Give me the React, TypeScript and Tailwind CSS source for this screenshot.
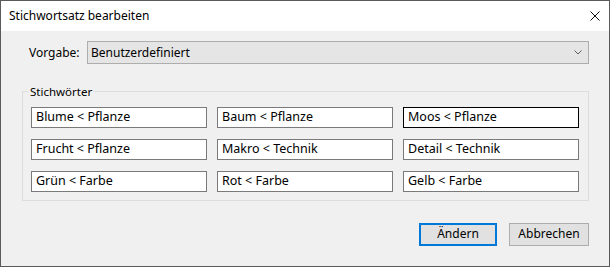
import React from "react";

const words = [
  "Blume < Pflanze",
  "Baum < Pflanze",
  "Moos < Pflanze",
  "Frucht < Pflanze",
  "Makro < Technik",
  "Detail < Technik",
  "Grün < Farbe",
  "Rot < Farbe",
  "Gelb < Farbe",
];

export default function App() {
  return (
    <div className="w-[610px] h-[267px] border border-[#5a5a5a] bg-[#f0f0f0] flex flex-col font-['Noto_Sans',sans-serif] text-black">
      <div className="h-[30px] bg-white flex items-center justify-between pl-[8px] pr-[9px] shrink-0">
        <span className="text-[12px] leading-none">Stichwortsatz bearbeiten</span>
        <svg width="10" height="10" viewBox="0 0 10 10" className="block">
          <path d="M0.5 0.5 L9.5 9.5 M9.5 0.5 L0.5 9.5" stroke="#111" strokeWidth="1" fill="none" />
        </svg>
      </div>
      <div className="flex-1 flex flex-col">
        <div className="flex items-center mt-[10px] pl-[28px] pr-[20px]">
          <span className="text-[12px] w-[58px] leading-none">Vorgabe:</span>
          <div className="flex-1 h-[23px] bg-[#e5e5e5] border border-[#adadad] flex items-center justify-between pl-[3px] pr-[6px]">
            <span className="text-[12px] leading-none">Benutzerdefiniert</span>
            <svg width="8" height="5" viewBox="0 0 8 5" className="block">
              <path d="M0.5 0.5 L4 4 L7.5 0.5" stroke="#606060" strokeWidth="1" fill="none" />
            </svg>
          </div>
        </div>
        <fieldset className="mt-[22px] ml-[21px] mr-[20px] border border-[#dcdcdc] pl-[8px] pr-[9px] pt-[9px] pb-[8px]">
          <legend className="-ml-[3px] px-[2px] text-[11.5px] leading-none">Stichwörter</legend>
          <div className="grid grid-cols-[176px_176px_176px] gap-x-[10px] gap-y-[11px]">
            {words.map((w, i) => (
              <div
                key={w}
                className={
                  "h-[21px] bg-white flex items-center pl-[4px] text-[12.5px] leading-none border " +
                  (i === 2 ? "border-black" : "border-[#7a7a7a]")
                }
              >
                {w}
              </div>
            ))}
          </div>
        </fieldset>
        <div className="flex justify-end mt-[22px] pr-[20px] gap-[12px]">
          <button className="w-[78px] h-[23px] bg-[#e1e1e1] border-2 border-[#0078d7] text-[12px] leading-none">Ändern</button>
          <button className="w-[80px] h-[23px] bg-[#e1e1e1] border border-[#adadad] text-[12px] leading-none">Abbrechen</button>
        </div>
      </div>
    </div>
  );
}
